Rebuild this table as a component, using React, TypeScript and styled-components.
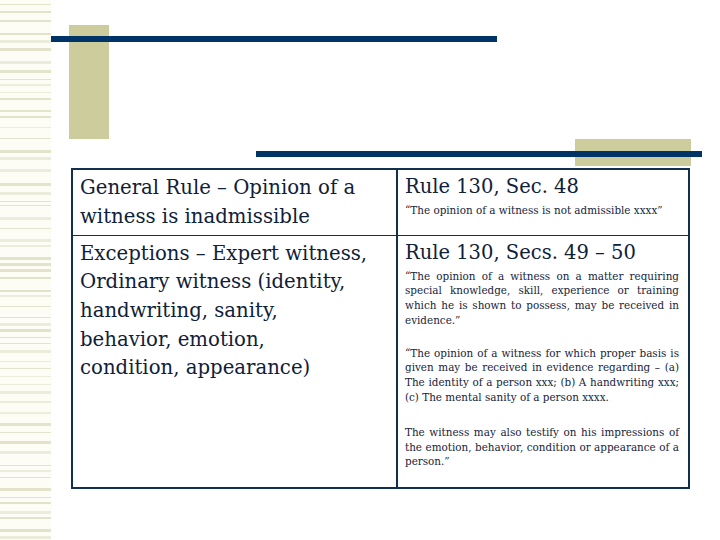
import React from "react";
import styled, { createGlobalStyle } from "styled-components";

const GlobalStyle = createGlobalStyle`
  html, body {
    margin: 0;
    padding: 0;
    background: #ffffff;
  }
  body {
    font-family: "DejaVu Serif", "Liberation Serif", serif;
    color: #102238;
  }
`;

const Page = styled.div`
  display: flex;
  width: 720px;
  height: 540px;
  overflow: hidden;
  background: #ffffff;
`;

const StripeColumn = styled.div`
  width: 51px;
  height: 540px;
  flex-shrink: 0;
  background: #fdfdf6;
`;

const Main = styled.div`
  flex: 1;
  display: flex;
  flex-direction: column;
  padding-top: 25px;
`;

const TopBand = styled.div`
  display: grid;
  grid-template-columns: 18px 40px 388px;
  grid-template-rows: 11px 6px 97px;
`;

const LowerBand = styled.div`
  display: grid;
  grid-template-columns: 205px 319px 116px 11px;
  grid-template-rows: 12px 6px 9px;
`;

const OliveBlock = styled.div<{ $col: string }>`
  grid-column: ${(p) => p.$col};
  grid-row: 1 / 4;
  background: #cccc9c;
`;

const NavyBar = styled.div<{ $col: string }>`
  grid-column: ${(p) => p.$col};
  grid-row: 2;
  background: #003366;
  z-index: 1;
`;

const Table = styled.table`
  margin: 2px 0 0 20px;
  width: 619px;
  height: 321px;
  border-collapse: collapse;
  border: 2px solid #10304d;
  table-layout: fixed;
`;

const Cell = styled.td<{ $wide?: boolean }>`
  vertical-align: top;
  border: 1px solid #10304d;
  padding: ${(p) => (p.$wide ? "4px 9px 0 7px" : "4px 6px 0 7px")};
`;

const Divided = styled(Cell)`
  border-left: 2px solid #10304d;
`;

const Statement = styled.div`
  font-size: 19.7px;
  line-height: 28.7px;
  color: #0f2139;
`;

const RuleTitle = styled.div`
  font-size: 19.5px;
  line-height: 26px;
  color: #0f2139;
  margin-bottom: 3px;
`;

const Quote = styled.p<{ $gap?: number; $plain?: boolean }>`
  margin: ${(p) => p.$gap ?? 0}px 0 0 0;
  font-size: 10.4px;
  line-height: 14.8px;
  text-align: ${(p) => (p.$plain ? "left" : "justify")};
  color: #16243a;
`;

const stripes: Array<[number, number, string]> = (() => {
  const out: Array<[number, number, string]> = [];
  let seed = 17;
  const rnd = () => {
    seed = (seed * 9301 + 49297) % 233280;
    return seed / 233280;
  };
  let y = 4;
  while (y < 540) {
    const h = rnd() < 0.35 ? 3 : rnd() < 0.5 ? 2 : 1;
    out.push([y, h, rnd() < 0.6 ? "#e3e3cb" : "#ececdc"]);
    y += h + 3 + Math.floor(rnd() * 9);
  }
  return out;
})();

const Stripes = () => (
  <StripeColumn>
    <svg width="51" height="540" viewBox="0 0 51 540">
      {stripes.map(([y, h, c], i) => (
        <rect key={i} x="0" y={y} width="51" height={h} fill={c} />
      ))}
    </svg>
  </StripeColumn>
);

const App = (): JSX.Element => {
  return (
    <>
      <GlobalStyle />
      <Page>
        <Stripes />
        <Main>
          <TopBand>
            <OliveBlock $col="2" />
            <NavyBar $col="1 / 4" />
          </TopBand>
          <LowerBand>
            <OliveBlock $col="3" />
            <NavyBar $col="2 / 5" />
          </LowerBand>
          <Table>
            <colgroup>
              <col style={{ width: 325 }} />
              <col />
            </colgroup>
            <tbody>
              <tr style={{ height: 66 }}>
                <Cell>
                  <Statement>
                    General Rule – Opinion of a
                    <br />
                    witness is inadmissible
                  </Statement>
                </Cell>
                <Divided $wide>
                  <RuleTitle>Rule 130, Sec. 48</RuleTitle>
                  <Quote $plain>
                    “The opinion of a witness is not admissible xxxx”
                  </Quote>
                </Divided>
              </tr>
              <tr>
                <Cell>
                  <Statement>
                    Exceptions – Expert witness,
                    <br />
                    Ordinary witness (identity,
                    <br />
                    handwriting, sanity,
                    <br />
                    behavior, emotion,
                    <br />
                    condition, appearance)
                  </Statement>
                </Cell>
                <Divided $wide>
                  <RuleTitle>Rule 130, Secs. 49 – 50</RuleTitle>
                  <Quote>
                    “The opinion of a witness on a matter requiring special
                    knowledge, skill, experience or training which he is shown
                    to possess, may be received in evidence.”
                  </Quote>
                  <Quote $gap={18}>
                    “The opinion of a witness for which proper basis is given
                    may be received in evidence regarding – (a) The identity of
                    a person xxx; (b) A handwriting xxx; (c) The mental sanity
                    of a person xxxx.
                  </Quote>
                  <Quote $gap={20}>
                    The witness may also testify on his impressions of the
                    emotion, behavior, condition or appearance of a person.”
                  </Quote>
                </Divided>
              </tr>
            </tbody>
          </Table>
        </Main>
      </Page>
    </>
  );
};

export default App;
